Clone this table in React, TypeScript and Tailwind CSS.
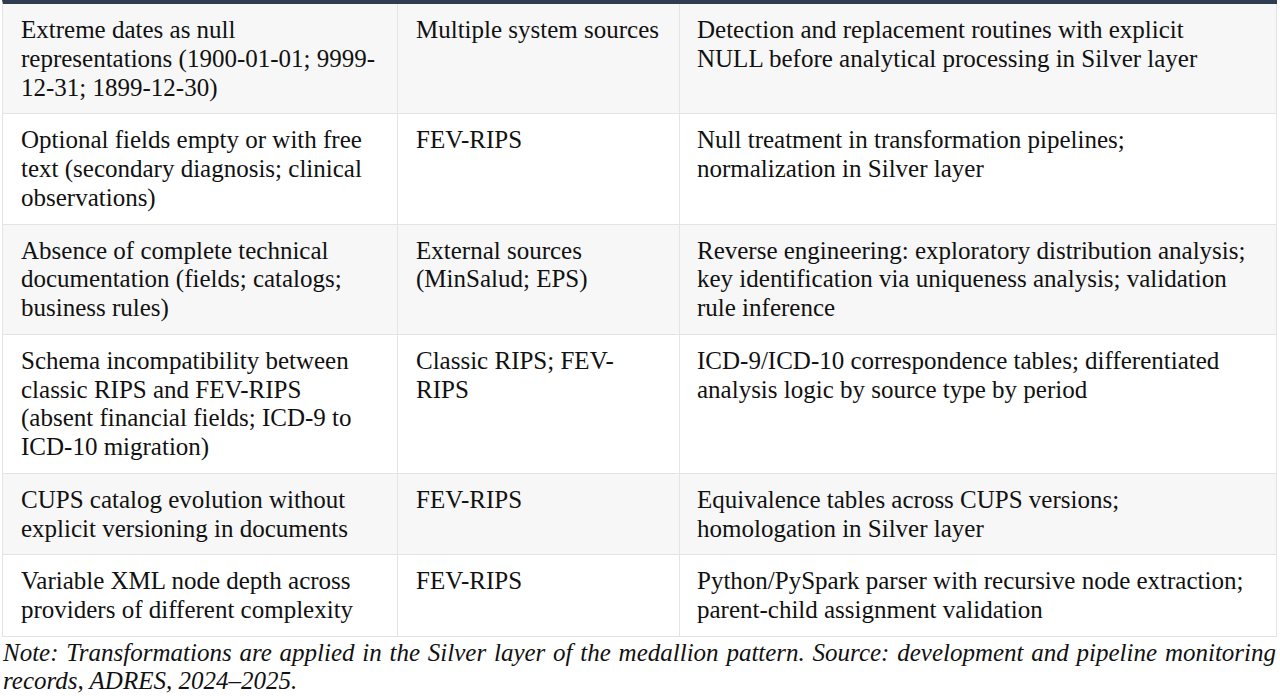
const rows: { risk: string[]; source: string[]; fix: string[] }[] = [
  {
    risk: ['Extreme dates as null', 'representations (1900-01-01; 9999-', '12-31; 1899-12-30)'],
    source: ['Multiple system sources'],
    fix: ['Detection and replacement routines with explicit', 'NULL before analytical processing in Silver layer'],
  },
  {
    risk: ['Optional fields empty or with free', 'text (secondary diagnosis; clinical', 'observations)'],
    source: ['FEV-RIPS'],
    fix: ['Null treatment in transformation pipelines;', 'normalization in Silver layer'],
  },
  {
    risk: ['Absence of complete technical', 'documentation (fields; catalogs;', 'business rules)'],
    source: ['External sources', '(MinSalud; EPS)'],
    fix: [
      'Reverse engineering: exploratory distribution analysis;',
      'key identification via uniqueness analysis; validation',
      'rule inference',
    ],
  },
  {
    risk: ['Schema incompatibility between', 'classic RIPS and FEV-RIPS', '(absent financial fields; ICD-9 to', 'ICD-10 migration)'],
    source: ['Classic RIPS; FEV-', 'RIPS'],
    fix: ['ICD-9/ICD-10 correspondence tables; differentiated', 'analysis logic by source type by period'],
  },
  {
    risk: ['CUPS catalog evolution without', 'explicit versioning in documents'],
    source: ['FEV-RIPS'],
    fix: ['Equivalence tables across CUPS versions;', 'homologation in Silver layer'],
  },
  {
    risk: ['Variable XML node depth across', 'providers of different complexity'],
    source: ['FEV-RIPS'],
    fix: ['Python/PySpark parser with recursive node extraction;', 'parent-child assignment validation'],
  },
];

function Lines({ lines }: { lines: string[] }) {
  return (
    <>
      {lines.map((l, i) => (
        <div key={i} className="whitespace-nowrap">
          {l}
        </div>
      ))}
    </>
  );
}

export default function App() {
  return (
    <div
      className="w-[1280px] h-[696px] overflow-hidden bg-white text-[#111] text-[25px] leading-[28.75px]"
      style={{ fontFamily: '"Liberation Serif", "Times New Roman", serif' }}
    >
      <div className="ml-[2px] w-[1275px] border-t-4 border-[#2f3d4f] border-l border-l-[#e4e4e4]">
        {rows.map((r, i) => (
          <div
            key={i}
            className={`grid grid-cols-[395px_282px_1fr] border-b border-[#e4e4e4] ${
              i % 2 === 0 ? 'bg-[#f7f7f7]' : 'bg-white'
            }`}
          >
            <div className="pl-[18px] pr-2 pt-3 pb-[11px] border-r border-[#e4e4e4]">
              <Lines lines={r.risk} />
            </div>
            <div className="pl-[18px] pr-2 pt-3 pb-[11px] border-r border-[#e4e4e4]">
              <Lines lines={r.source} />
            </div>
            <div className="pl-[17px] pr-2 pt-3 pb-[11px] border-r border-[#e4e4e4]">
              <Lines lines={r.fix} />
            </div>
          </div>
        ))}
      </div>
      {/* caption is justified, like the source document */}
      <p className="ml-[3px] mt-[2px] w-[1273px] italic leading-[28px] text-justify">
        Note: Transformations are applied in the Silver layer of the medallion pattern. Source: development and pipeline
        monitoring records, ADRES, 2024–2025.
      </p>
    </div>
  );
}
